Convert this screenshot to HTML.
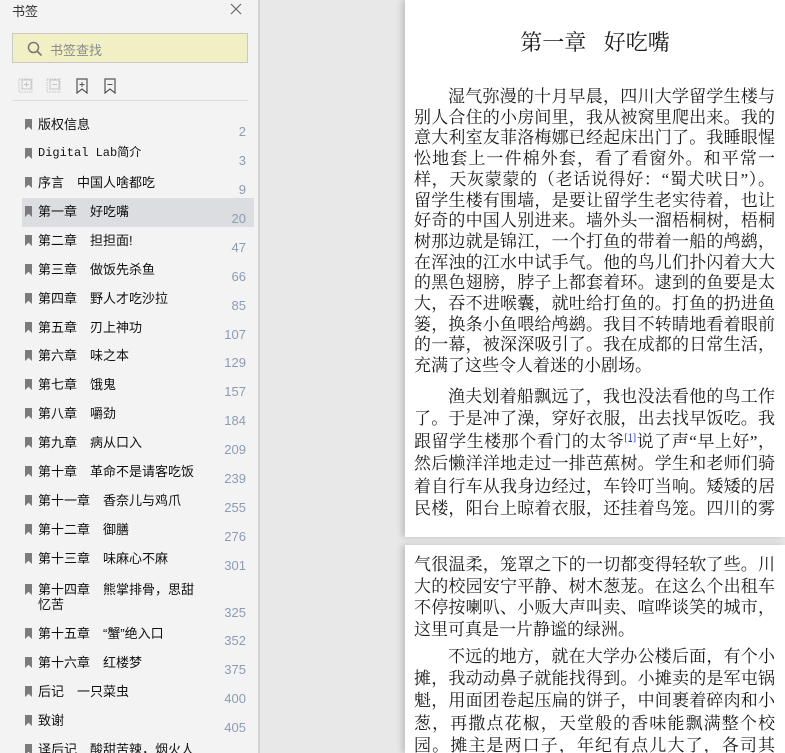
<!DOCTYPE html>
<html style="width:785px;height:753px;overflow:hidden"><head><meta charset="utf-8">
<style>
*{margin:0;padding:0;box-sizing:border-box}
body{width:785px;height:753px;overflow:hidden;background:#e8e8e8;position:relative;font-family:"Liberation Sans","Noto Sans CJK SC",sans-serif}
#side{position:absolute;left:0;top:0;width:260px;height:753px;background:#f3f3f3;border-right:2px solid #d2d2d2}
.title{position:absolute;left:12px;top:1px;font-size:13px;color:#333}
.close{position:absolute;left:229px;top:2px;width:14px;height:14px}
.search{position:absolute;left:12px;top:33px;width:236px;height:30px;background:#f0f0c4;border:1px solid #c8c8c8}
.search span{position:absolute;left:37px;top:6px;font-size:13px;color:#8a8a8a}
.tools{position:absolute;left:12px;top:100px;width:236px;border-top:1px solid #dcdcdc}
.row{position:absolute;left:22px;width:232px;height:29px}
.row.sel{background:#dcdde1}
.row i{position:absolute;left:3px;top:8px;width:7px;height:11px;background:#7b7b7b;clip-path:polygon(0 0,100% 0,100% 100%,50% 70%,0 100%)}
.row b{position:absolute;left:16px;top:6px;font-weight:normal;font-size:13px;color:#111;white-space:nowrap;line-height:15px}
.row em{position:absolute;right:8px;top:13px;font-style:normal;font-size:13px;color:#8d9bb5}
.page{position:absolute;left:405px;width:380px;background:#fff;box-shadow:-3px 0 6px rgba(0,0,0,.18)}
.txt{position:absolute;left:414px;width:361px;font-family:"Liberation Serif","Noto Serif CJK SC",serif;font-size:17px;color:#1a1a1a}
.txt div{text-align:justify;text-align-last:justify;white-space:nowrap;overflow:visible}
.txt div.l{text-align-last:left}
.ind{padding-left:34px}
sup{color:#2233cc;font-size:10px;text-decoration:underline;line-height:0}
h1{position:absolute;left:405px;width:380px;top:26px;text-align:center;font-family:"Liberation Serif","Noto Serif CJK SC",serif;font-weight:normal;font-size:22px;color:#1a1a1a;word-spacing:12px}
</style></head><body>
<div id="side">
<div class="title">书签</div>
<svg class="close" viewBox="0 0 14 14"><path d="M2 2L12 12M12 2L2 12" stroke="#666" stroke-width="1.2"/></svg>
<div class="search"><svg style="position:absolute;left:14px;top:7px" width="16" height="16" viewBox="0 0 16 16"><circle cx="6.5" cy="6.5" r="5" fill="none" stroke="#777" stroke-width="1.5"/><path d="M10 10L14.5 14.5" stroke="#777" stroke-width="1.6"/></svg><span>书签查找</span></div>
<svg style="position:absolute;left:18px;top:77px" width="100" height="18" viewBox="0 0 100 18">
<g stroke="#c4c4c4" fill="none" stroke-dasharray="1.5 1"><rect x="1" y="2" width="13" height="13"/></g><rect x="4" y="3" width="9" height="9" fill="none" stroke="#c4c4c4"/><path d="M8.5 5v5M6 7.5h5" stroke="#c4c4c4"/>
<g stroke="#c4c4c4" fill="none" stroke-dasharray="1.5 1"><rect x="29" y="2" width="13" height="13"/></g><rect x="32" y="3" width="9" height="9" fill="none" stroke="#c4c4c4"/><path d="M34 7.5h5" stroke="#c4c4c4"/>
<path d="M59 2h10v14l-5-4-5 4z" fill="none" stroke="#555" stroke-width="1.2"/><path d="M64 5v5M61.5 7.5h5" stroke="#555"/>
<path d="M87 2h10v14l-5-4-5 4z" fill="none" stroke="#555" stroke-width="1.2"/><path d="M89.5 7.5h5" stroke="#555"/>
</svg>
<div class="tools"></div>
<div class="row" style="top:111px"><i></i><b>版权信息</b><em>2</em></div>
<div class="row" style="top:140px"><i></i><b style="font-family:'Liberation Mono','Noto Sans CJK SC',monospace;font-size:12px">Digital Lab简介</b><em>3</em></div>
<div class="row" style="top:169px"><i></i><b>序言　中国人啥都吃</b><em>9</em></div>
<div class="row sel" style="top:198px"><i></i><b>第一章　好吃嘴</b><em>20</em></div>
<div class="row" style="top:227px"><i></i><b>第二章　担担面!</b><em>47</em></div>
<div class="row" style="top:256px"><i></i><b>第三章　做饭先杀鱼</b><em>66</em></div>
<div class="row" style="top:285px"><i></i><b>第四章　野人才吃沙拉</b><em>85</em></div>
<div class="row" style="top:314px"><i></i><b>第五章　刃上神功</b><em>107</em></div>
<div class="row" style="top:342px"><i></i><b>第六章　味之本</b><em>129</em></div>
<div class="row" style="top:371px"><i></i><b>第七章　饿鬼</b><em>157</em></div>
<div class="row" style="top:400px"><i></i><b>第八章　嚼劲</b><em>184</em></div>
<div class="row" style="top:429px"><i></i><b>第九章　病从口入</b><em>209</em></div>
<div class="row" style="top:458px"><i></i><b>第十章　革命不是请客吃饭</b><em>239</em></div>
<div class="row" style="top:487px"><i></i><b>第十一章　香奈儿与鸡爪</b><em>255</em></div>
<div class="row" style="top:516px"><i></i><b>第十二章　御膳</b><em>276</em></div>
<div class="row" style="top:545px"><i></i><b>第十三章　味麻心不麻</b><em>301</em></div>
<div class="row" style="top:576px;height:43px"><i></i><b>第十四章　熊掌排骨，思甜<br>忆苦</b><em style="top:29px">325</em></div>
<div class="row" style="top:620px"><i></i><b>第十五章　“蟹”绝入口</b><em>352</em></div>
<div class="row" style="top:649px"><i></i><b>第十六章　红楼梦</b><em>375</em></div>
<div class="row" style="top:678px"><i></i><b>后记　一只菜虫</b><em>400</em></div>
<div class="row" style="top:707px"><i></i><b>致谢</b><em>405</em></div>
<div class="row" style="top:736px"><i></i><b>译后记　酸甜苦辣，烟火人</b><em></em></div>
</div>

<div class="page" style="top:0;height:537px"></div>
<div class="page" style="top:545px;height:208px"></div>
<h1>第一章 好吃嘴</h1>

<div class="txt" style="top:87px;line-height:20.7px">
<div class="ind">湿气弥漫的十月早晨，四川大学留学生楼与</div>
<div>别人合住的小房间里，我从被窝里爬出来。我的</div>
<div>意大利室友菲洛梅娜已经起床出门了。我睡眼惺</div>
<div>忪地套上一件棉外套，看了看窗外。和平常一</div>
<div>样，天灰蒙蒙的（老话说得好：“蜀犬吠日”）。</div>
<div>留学生楼有围墙，是要让留学生老实待着，也让</div>
<div>好奇的中国人别进来。墙外头一溜梧桐树，梧桐</div>
<div>树那边就是锦江，一个打鱼的带着一船的鸬鹚，</div>
<div>在浑浊的江水中试手气。他的鸟儿们扑闪着大大</div>
<div>的黑色翅膀，脖子上都套着环。逮到的鱼要是太</div>
<div>大，吞不进喉囊，就吐给打鱼的。打鱼的扔进鱼</div>
<div>篓，换条小鱼喂给鸬鹚。我目不转睛地看着眼前</div>
<div>的一幕，被深深吸引了。我在成都的日常生活，</div>
<div class="l">充满了这些令人着迷的小剧场。</div>
</div>
<div class="txt" style="top:386px;line-height:22.4px">
<div class="ind">渔夫划着船飘远了，我也没法看他的鸟工作</div>
<div>了。于是冲了澡，穿好衣服，出去找早饭吃。我</div>
<div>跟留学生楼那个看门的太爷<sup>[1]</sup>说了声“早上好”，</div>
<div>然后懒洋洋地走过一排芭蕉树。学生和老师们骑</div>
<div>着自行车从我身边经过，车铃叮当响。矮矮的居</div>
<div>民楼，阳台上晾着衣服，还挂着鸟笼。四川的雾</div>
</div>
<div class="txt" style="top:554px;line-height:21.5px">
<div>气很温柔，笼罩之下的一切都变得轻软了些。川</div>
<div>大的校园安宁平静、树木葱茏。在这么个出租车</div>
<div>不停按喇叭、小贩大声叫卖、喧哗谈笑的城市，</div>
<div class="l">这里可真是一片静谧的绿洲。</div>
</div>
<div class="txt" style="top:646px;line-height:22.2px">
<div class="ind">不远的地方，就在大学办公楼后面，有个小</div>
<div>摊，我动动鼻子就能找得到。小摊卖的是军屯锅</div>
<div>魁，用面团卷起压扁的饼子，中间裹着碎肉和小</div>
<div>葱，再撒点花椒，天堂般的香味能飘满整个校</div>
<div>园。摊主是两口子，年纪有点儿大了，各司其</div>
</div>
</body></html>
